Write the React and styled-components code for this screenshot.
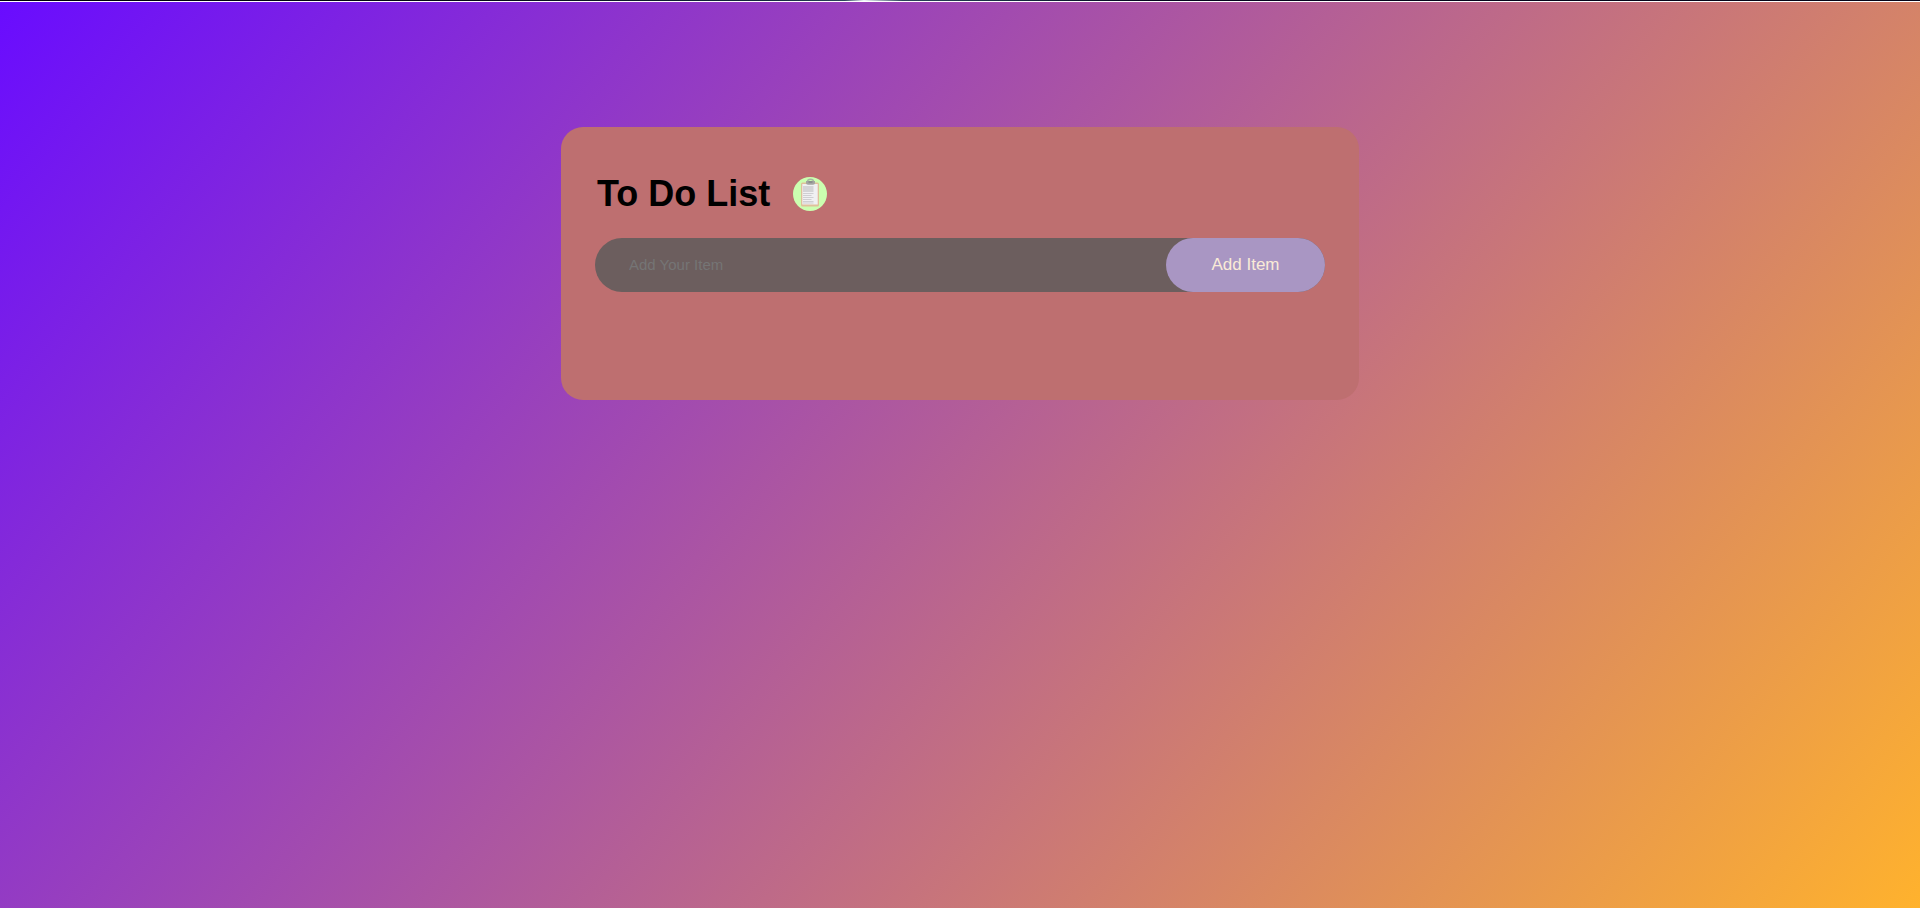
import React from "react";
import styled, { createGlobalStyle } from "styled-components";

const GlobalStyle = createGlobalStyle`
  *, *::before, *::after { box-sizing: border-box; }
  body {
    margin: 0;
    font-family: "Liberation Sans", Arial, sans-serif;
  }
`;

const Page = styled.main`
  min-height: 100vh;
  display: flex;
  flex-direction: column;
`;

const TopEdge = styled.div`
  height: 2px;
  background: linear-gradient(90deg, #000004, #050818 25%, #14283c 40%, #2a4358 44%, #f0f5fa 45%, #2a4358 47%, #14283c 53%, #05051c 60%, #050418) top / 100% 1px no-repeat #ffffff;
`;

const Backdrop = styled.div`
  flex: 1;
  padding: 125px 16px 24px;
  background: linear-gradient(130deg, #690cff, #ffb22d);
`;

const Card = styled.section`
  width: 100%;
  max-width: 798px;
  min-height: 273px;
  margin: 0 auto;
  padding: 44px 34px 72px;
  border-radius: 22px;
  background: #be6f70;
`;

const Heading = styled.header`
  display: flex;
  align-items: center;
  gap: 23px;
  height: 46px;
  margin-bottom: 21px;
  padding-left: 2px;
`;

const Title = styled.h1`
  margin: 0;
  font-size: 36px;
  line-height: 42px;
  font-weight: 600;
  color: #000000;
`;

const Form = styled.form`
  display: flex;
  height: 54px;
  border-radius: 27px;
  background: #6c5e5e;
`;

const ItemInput = styled.input`
  flex: 1;
  min-width: 0;
  padding: 0 34px 2px;
  border: 0;
  outline: 0;
  background: transparent;
  color: #ffffff;
  font: 15px "Liberation Sans", Arial, sans-serif;

  &::placeholder {
    color: #757575;
    opacity: 1;
  }
`;

const AddButton = styled.button`
  width: 159px;
  border: 0;
  border-radius: 27px;
  background: #a996c3;
  color: #faebd7;
  font: 17px "Liberation Sans", Arial, sans-serif;
  cursor: pointer;
`;

function ClipboardIcon() {
  return (
    <svg width="34" height="34" viewBox="0 0 34 34" aria-hidden="true">
      <circle cx="17" cy="17" r="17" fill="#cbffb0" />
      <rect x="8" y="5.5" width="18" height="24" rx="1.5" fill="#dfc09b" />
      <rect x="9.3" y="7" width="15.4" height="20.5" fill="#f0f0f2" />
      <rect x="10" y="9" width="10.5" height="6" fill="#d4d4d6" />
      <path
        d="M10 16.5h10.5M10 18.5h8.5M10 20.5h10.5M10 22.5h8.5M10 24.5h10.5M10 26h10.5"
        stroke="#cfcfd2"
        strokeWidth="1"
      />
      <path d="M14.5 4.5a3 2.2 0 0 1 6 0" fill="none" stroke="#a8b8a3" strokeWidth="1.4" />
      <path d="M13 4h9v2q0 1.8-2 1.8h-5q-2 0-2-1.8z" fill="#a3a5a2" />
      <path d="M15.5 5h4" stroke="#858987" strokeWidth="1.5" />
    </svg>
  );
}

export default function App() {
  return (
    <Page>
      <GlobalStyle />
      <TopEdge />
      <Backdrop>
        <Card>
          <Heading>
            <Title>To Do List</Title>
            <ClipboardIcon />
          </Heading>
          <Form onSubmit={(event) => event.preventDefault()}>
            <ItemInput type="text" placeholder="Add Your Item" aria-label="Add Your Item" />
            <AddButton type="submit">Add Item</AddButton>
          </Form>
        </Card>
      </Backdrop>
    </Page>
  );
}
